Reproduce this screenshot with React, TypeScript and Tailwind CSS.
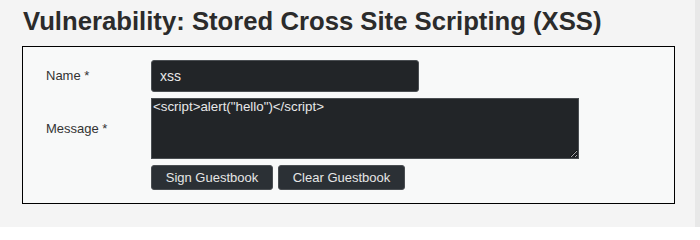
export default function App() {
  return (
    <div className="flex h-[227px] w-[700px] overflow-hidden bg-[#f4f4f4] font-['Liberation_Sans',Arial,sans-serif] text-[#333]">
      <div className="flex-1 pl-[22px]">
        <h1 className="mt-[6px] h-[40px] pl-px text-[25.7px] font-bold leading-[30px] text-[#2b2b2b]">
          Vulnerability: Stored Cross Site Scripting (XSS)
        </h1>

        <div className="w-[653px] border border-black bg-[#f8f9f9] pb-[13px] pl-[23px] pt-[13px]">
          <form className="grid grid-cols-[105px_auto] items-center gap-y-[6px] text-[13px]">
            <label className="text-[#333]">Name *</label>
            <input
              type="text"
              defaultValue="xss"
              className="h-[32px] w-[268px] rounded-[3px] border border-[#4a4e52] bg-[#222528] px-[8px] text-[14px] text-[#e8e8e8] outline-none"
            />

            <label className="text-[#333]">Message *</label>
            <textarea
              defaultValue={'<script>alert("hello")</script>'}
              className="block h-[61px] w-[428px] border border-[#4a4e52] bg-[#222528] px-[1px] py-0 text-[13.33px] leading-[16px] text-[#e8e8e8] outline-none"
            />

            <span />
            <div className="flex gap-[5px]">
              <button
                type="button"
                className="h-[25px] w-[122px] rounded-[3px] border border-[#4a4e52] bg-[#2b3035] text-[13px] text-[#e6e6e6]"
              >
                Sign Guestbook
              </button>
              <button
                type="button"
                className="h-[25px] w-[127px] rounded-[3px] border border-[#4a4e52] bg-[#2b3035] text-[13px] text-[#e6e6e6]"
              >
                Clear Guestbook
              </button>
            </div>
          </form>
        </div>
      </div>
      <div className="h-full w-[5px] bg-[#e8e8e8]" />
    </div>
  );
}
